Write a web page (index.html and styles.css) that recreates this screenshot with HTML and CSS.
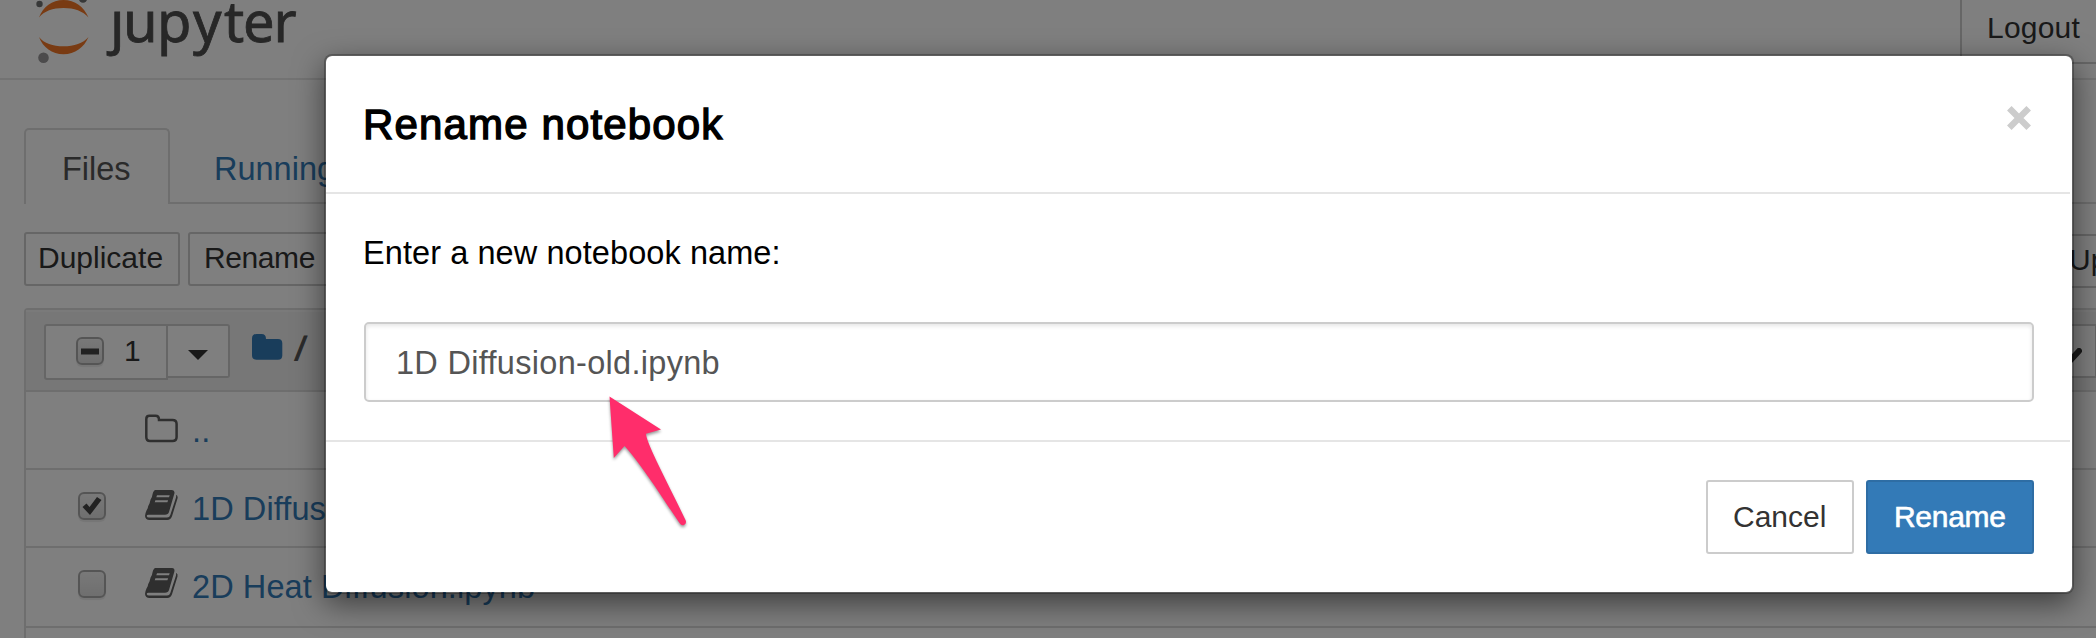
FILE: index.html
```html
<!DOCTYPE html>
<html lang="en">
<head>
<meta charset="utf-8">
<title>Jupyter</title>
<link rel="stylesheet" href="styles.css">
</head>
<body>
<div class="page">
  <header class="header">
    <svg class="logo" width="310" height="64" viewBox="0 0 310 64">
      <g class="logo-arcs">
        <path d="M39 17.5C43 7 52 0 63.500 0S84 7 88.500 17.500C83 11 74 8 63.500 8S44 11 39 17.500Z"/>
        <path d="M39 37C43 47.500 52 54.300 63.500 54.300S84 47.500 88.500 37C83 43.500 74 46.300 63.500 46.300S44 43.500 39 37Z"/>
      </g>
      <circle class="moon-a" cx="43.500" cy="57.800" r="5.300"/>
      <circle class="moon-b" cx="39.500" cy="4" r="3.200"/>
      <circle class="moon-b" cx="83" cy="-1.500" r="4.200"/>
      <text class="logo-text" y="41.500" x="110 123 157 193 224 243 273.500">jupyter</text>
      <rect class="logo-cover" x="104" y="-10" width="20" height="20"/>
    </svg>
    <button class="btn logout">Logout</button>
  </header>
  <nav class="tabs">
    <a class="tab active"><span>Files</span></a>
    <a class="tab"><span>Running</span></a>
  </nav>
  <div class="toolbar">
    <button class="btn duplicate"><span>Duplicate</span></button>
    <button class="btn rename-sel"><span>Rename</span></button>
    <button class="btn upload">Upload</button>
  </div>
  <div class="list">
    <div class="list-head">
      <div class="select-all"><span class="check small">
        <svg width="28" height="28" viewBox="0 0 28 28"><path d="M5 11.500h18v6H5z"/></svg></span><span class="count">1</span></div>
      <div class="drop"><svg width="20" height="10" viewBox="0 0 20 10"><path d="M0 0h20L10 10z"/></svg></div>
      <svg class="home" width="31" height="26" viewBox="0 0 31 26"><path d="M0 4.500Q0 0 4.500 0H9.500Q14 0 14 5H26Q30.300 5 30.300 9.300V21.500Q30.300 25.700 26 25.700H4.500Q0 25.700 0 21.500Z"/></svg>
      <span class="slash">/</span>
      <div class="sort"><svg width="34" height="24" viewBox="0 0 34 24"><path d="M3 3L17 18L31 3"/></svg></div>
    </div>
    <div class="row">
      <span class="check hidden"></span>
      <svg class="icon" width="34" height="30" viewBox="0 0 34 30"><path class="folder-line" d="M1.300 5Q1.300 1.800 4.500 1.800H10.500Q14 1.800 14 6H27.500Q31.600 6 31.600 10V23Q31.600 27 27.500 27H5Q1.300 27 1.300 23Z"/></svg>
      <a class="name">..</a>
    </div>
    <div class="row">
      <span class="check"><svg width="28" height="28" viewBox="0 0 28 28"><path d="M4.500 15L8.500 11.500L11.500 15L19 5L23.500 8L12 23Z"/></svg></span>
      <svg class="icon" width="34" height="30" viewBox="0 0 34 30"><use href="#book"/></svg>
      <a class="name">1D Diffusion.ipynb</a>
    </div>
    <div class="row tall">
      <span class="check"></span>
      <svg class="icon" width="34" height="30" viewBox="0 0 34 30"><use href="#book"/></svg>
      <a class="name">2D Heat Diffusion.ipynb</a>
    </div>
    <div class="row"></div>
  </div>
</div>
<svg class="defs" width="0" height="0">
  <g id="book">
    <path fill-rule="evenodd" d="M10.500 0H27Q30 .3 29.400 3.500L24 22Q23.200 24.800 20 24.800H3.500Q1.800 24.800 1.700 26Q2 27.600 4 27.600H22Q24.500 27.600 25.300 25L31 7.500Q31.300 6.300 31 4.800Q33.200 5.800 32.500 8.500L27 26.300Q25.800 30 22.300 30H4.500Q.5 30 0 26Q.1 23.500 1.500 20.500L2.700 18.300Q3.200 15.500 4.500 13.500L5.600 9.500Q7.300 7 7.600 4Q8.500 .3 10.500 0ZM12 5.300L11.300 7.300H24L24.700 5.300ZM10.400 10.200L9.700 12.200H22.400L23.100 10.200Z"/>
  </g>
</svg>
<div class="backdrop"></div>
<div class="modal">
  <div class="modal-header">
    <h4 class="modal-title"><span>Rename notebook</span></h4>
    <svg class="close" width="24" height="24" viewBox="0 0 24 24"><path d="M2.300 2.300L21.700 21.700M21.700 2.300L2.300 21.700"/></svg>
  </div>
  <div class="modal-body">
    <p class="prompt"><span>Enter a new notebook name:</span></p>
    <div class="field"><span>1D Diffusion-old.ipynb</span></div>
  </div>
  <div class="modal-footer">
    <button class="btn cancel"><span>Cancel</span></button>
    <button class="btn primary"><span>Rename</span></button>
  </div>
</div>
<svg class="arrow" width="90" height="140" viewBox="0 0 90 140">
  <path d="M5.500 4.500L57 37.500L42 41.800Q42 47 53 70C62 89 72 108 81.500 128Q83 131 80 133Q77.500 134 75.500 131C65 116 55 100 44 84.500Q29 63 20.500 54L9.800 66Z"/>
</svg>
</body>
</html>
```
FILE: styles.css
```css
* { box-sizing: border-box; }
body {
  margin: 0;
  position: relative;
  width: 2096px;
  height: 638px;
  overflow: hidden;
  background: #fff;
  color: #000;
  font-family: "Liberation Sans", Arial, sans-serif;
  font-size: 32.5px;
}
svg { display: block; flex: none; }
.defs { position: absolute; }
.page { width: 2160px; height: 638px; overflow: hidden; }

.btn {
  flex: none;
  margin: 0;
  padding: 0;
  border: 2px solid #ccc;
  border-radius: 3px;
  background: #fff;
  color: #333;
  font: 30px/48px "Liberation Sans", Arial, sans-serif;
  text-align: left;
  white-space: nowrap;
}

.header {
  display: flex;
  justify-content: space-between;
  height: 80px;
  border-bottom: 2px solid #e7e7e7;
}
.logo-arcs { fill: #f37726; }
.moon-a { fill: #989798; }
.moon-b { fill: #6f7070; }
.logo-text { font-family: "Noto Sans", sans-serif; font-size: 56px; fill: #4e4e4e; stroke: #4e4e4e; stroke-width: .8; }
.logo-cover { fill: #fff; }
.logout { width: 200px; height: 74px; margin-top: -10px; padding: 10px 0 12px 25px; line-height: 52px; letter-spacing: .2px; }

.tabs {
  display: flex;
  height: 76px;
  margin: 48px 0 0 24px;
  border-bottom: 2px solid #ddd;
}
.tab { height: 76px; padding: 2px 0 0 44px; line-height: 78px; color: #337ab7; }
.tab.active {
  width: 146px;
  padding: 0 0 0 36px;
  border: 2px solid #ddd;
  border-bottom: 0;
  border-radius: 5px 5px 0 0;
  background: #fff;
  color: #555;
}

.toolbar { display: flex; gap: 8px; margin: 28px 0 0 24px; }
.duplicate { width: 156px; height: 54px; padding: 0 0 2px 12px; }
.rename-sel { width: 150px; height: 54px; padding: 0 0 2px 14px; letter-spacing: -.4px; }
.upload { width: 120px; height: 54px; margin: 2px 0 -2px 1709px; padding: 0 0 2px 12px; }

.list { margin: 22px 0 0 24px; border: 2px solid #ddd; border-radius: 4px 4px 0 0; }
.list-head {
  display: flex;
  height: 82px;
  padding: 14px 0 0 18px;
  border-bottom: 2px solid #ddd;
  background: #eee;
  box-shadow: inset 0 2px #f4f4f4;
}
.select-all { display: flex; width: 124px; height: 56px; padding: 11px 0 0 30px; border: 2px solid #ccc; background: #fff; border-radius: 3px 0 0 3px; }
.count { margin-left: 20px; font-size: 30px; line-height: 30px; margin-top: -1px; color: #333; }
.drop { width: 62px; height: 54px; padding: 24px 0 0 20px; border: 2px solid #ccc; border-left: 0; background: #fff; border-radius: 0 3px 3px 0; fill: #333; }
.home { margin: 10px 0 0 22px; fill: #337ab7; }
.slash { width: 20px; margin: 0 0 0 12px; line-height: 50px; font-size: 33px; color: #555; -webkit-text-stroke: 1.2px #555; transform: skewX(-7deg); }
.sort { width: 80px; height: 54px; margin-left: 1702px; padding: 22px 0 0 29px; border: 2px solid #ccc; background: #fff; }
.sort path { fill: none; stroke: #333; stroke-width: 6; stroke-linecap: round; }

.row { display: flex; height: 78px; border-bottom: 2px solid #ddd; padding-left: 52px; }
.row.tall { height: 80px; }
.check {
  flex: none;
  width: 28px;
  height: 28px;
  margin-top: 22px;
  border: 2px solid #ababab;
  border-radius: 6px;
  background: linear-gradient(#f2f2f2, #dedede);
  box-shadow: 0 2px 1px #ececec;
  fill: #444;
}
.check svg { margin: -2px; }
.check.small { margin-top: 0; }
.check.hidden { visibility: hidden; }
.icon { margin: 20px 0 0 39px; fill: #5e5e5e; }
.row:nth-child(2) .icon { margin-top: 22px; }
.folder-line { fill: none; stroke: #5e5e5e; stroke-width: 2.500; }
.name { margin-left: 13px; line-height: 79px; letter-spacing: .1px; color: #337ab7; white-space: nowrap; }

.backdrop { position: absolute; inset: 0; background: rgba(0, 0, 0, .5); }
.modal {
  position: absolute;
  left: 324px;
  top: 54px;
  width: 1750px;
  height: 540px;
  border: 2px solid rgba(0, 0, 0, .25);
  border-radius: 8px;
  background: #fff;
  background-clip: padding-box;
  box-shadow: 0 10px 30px rgba(0, 0, 0, .5);
}
.modal-header {
  display: flex;
  justify-content: space-between;
  width: 1744px;
  height: 138px;
  padding: 0 0 0 37px;
  border-bottom: 2px solid #e5e5e5;
}
.modal-title { margin: 0; font-size: 42px; font-weight: 400; line-height: 138px; letter-spacing: 1.15px; -webkit-text-stroke: 1.4px #000; }
.close { margin: 50px 39px 0 0; stroke: #ccc; stroke-width: 6.400; }
.modal-body { height: 246px; padding: 38px 38px 0 38px; }
.prompt { margin: 0 0 30px -1px; height: 60px; line-height: 43px; letter-spacing: .08px; }
.field {
  height: 80px;
  padding-left: 30px;
  border: 2px solid #ccc;
  border-radius: 5px;
  box-shadow: inset 0 2px 4px rgba(0, 0, 0, .1);
  line-height: 78px;
  letter-spacing: .3px;
  color: #555;
}
.modal-footer {
  display: flex;
  justify-content: flex-end;
  gap: 12px;
  width: 1744px;
  padding: 38px 36px 0 0;
  border-top: 2px solid #e5e5e5;
}
.modal-footer .btn { height: 74px; line-height: 70px; }
.modal-footer .cancel { width: 148px; padding-left: 25px; }
.modal-footer .primary { width: 168px; padding-left: 26px; background: #337ab7; border-color: #2e6da4; color: #fff; letter-spacing: -.3px; -webkit-text-stroke: .6px #fff; }
.arrow {
  position: absolute;
  left: 604px;
  top: 392px;
  fill: #ff2d6b;
  filter: drop-shadow(0 2px 1.500px rgba(0, 0, 0, .4));
}
```
